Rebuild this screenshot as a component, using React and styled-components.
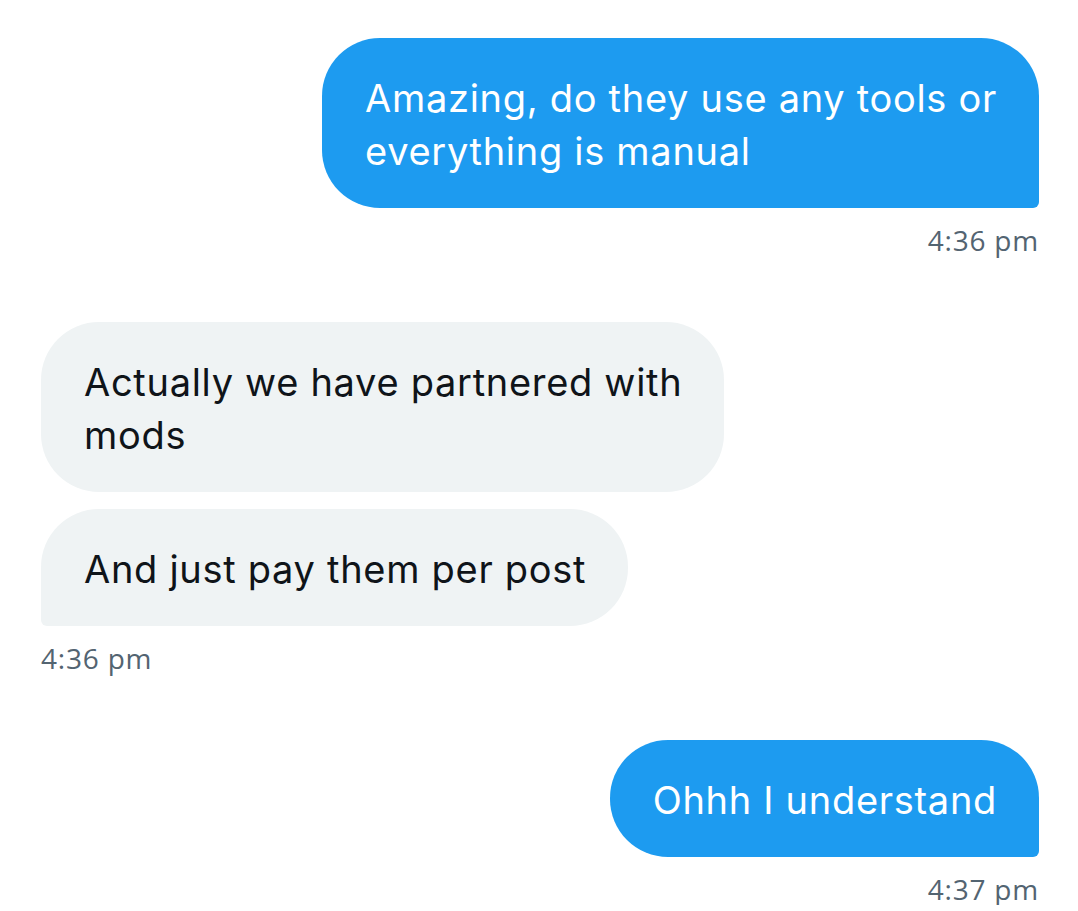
import styled, { createGlobalStyle } from "styled-components";

const GlobalStyle = createGlobalStyle`
    html, body {
        margin: 0;
        padding: 0;
        background: #ffffff;
    }
    body {
        font-family: Inter, "Noto Sans", sans-serif;
        -webkit-font-smoothing: antialiased;
    }
`

const Chat = styled.div`
    display: flex;
    flex-direction: column;
    gap: 66px;
    padding: 38px 39px 0 41px;
    width: 1078px;
    box-sizing: border-box;
`

const Group = styled.div`
    display: flex;
    flex-direction: column;
    align-items: ${props => props.$mine ? "flex-end" : "flex-start"};
    gap: 17px;
`

const Bubble = styled.div`
    background: ${props => props.$mine ? "#1d9bf0" : "#eff3f4"};
    color: ${props => props.$mine ? "#ffffff" : "#0f1419"};
    font-family: Inter, "Noto Sans", sans-serif;
    font-size: 38px;
    letter-spacing: 0.7px;
    line-height: 53px;
    padding: 34px 42px 30px 43px;
    border-radius: ${props => props.$radius};
    white-space: nowrap;
`

const Time = styled.div`
    font-family: "Open Sans", Roboto, sans-serif;
    font-size: 28px;
    letter-spacing: 0.8px;
    line-height: 32px;
    color: #536471;
    margin-top: -1px;
`

const groups = [
    {
        mine: true,
        time: "4:36 pm",
        messages: [["Amazing, do they use any tools or", "everything is manual"]],
    },
    {
        mine: false,
        time: "4:36 pm",
        messages: [["Actually we have partnered with", "mods"], ["And just pay them per post"]],
    },
    {
        mine: true,
        time: "4:37 pm",
        messages: [["Ohhh I understand"]],
    },
]

// the last bubble of a group gets the small tail corner
const cornerFor = (mine, last) => {
    if (!last) return "58px"
    return mine ? "58px 58px 6px 58px" : "58px 58px 58px 6px"
}

export default function App() {
    return (
        <>
            <GlobalStyle />
            <Chat>
                {groups.map((group, g) => (
                    <Group key={g} $mine={group.mine}>
                        {group.messages.map((lines, i) => (
                            <Bubble
                                key={i}
                                $mine={group.mine}
                                $radius={cornerFor(group.mine, i === group.messages.length - 1)}
                            >
                                {lines.map((line, j) => (
                                    <span key={j}>
                                        {j > 0 && <br />}
                                        {line}
                                    </span>
                                ))}
                            </Bubble>
                        ))}
                        <Time>{group.time}</Time>
                    </Group>
                ))}
            </Chat>
        </>
    );
}
